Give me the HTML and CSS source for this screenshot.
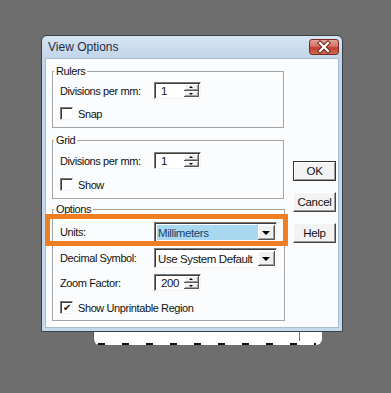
FILE: index.html
```html
<!DOCTYPE html>
<html lang="en">
<head>
  <meta charset="UTF-8" />
  <title>View Options</title>
  <link rel="stylesheet" href="styles.css">
</head>
<body>
  <div class="desk">
    <div class="window">
      <div class="titlebar">
        <span class="title">View Options</span>
        <span class="close">
          <svg width="28" height="14" viewBox="0 0 28 14">
            <path d="M10 3 L18 11 M18 3 L10 11" stroke="#6b2a20" stroke-width="4.2" stroke-linecap="square" fill="none"/>
            <path d="M10 3 L18 11 M18 3 L10 11" stroke="#fff" stroke-width="2.2" stroke-linecap="square" fill="none"/>
          </svg>
        </span>
      </div>
      <div class="frame">
        <div class="client">
          <div class="groups">
            <fieldset class="group">
              <legend>Rulers</legend>
              <div class="row">
                <span class="label">Divisions per mm:</span>
                <div class="spin"><span class="val">1</span><span class="arrows"><i class="up"></i><i class="down"></i></span></div>
              </div>
              <div class="check"><span class="box"></span>Snap</div>
            </fieldset>

            <fieldset class="group grid">
              <legend>Grid</legend>
              <div class="row">
                <span class="label">Divisions per mm:</span>
                <div class="spin"><span class="val">1</span><span class="arrows"><i class="up"></i><i class="down"></i></span></div>
              </div>
              <div class="check"><span class="box"></span>Show</div>
            </fieldset>

            <fieldset class="group options">
              <legend>Options</legend>
              <div class="row units">
                <span class="label">Units:</span>
                <div class="combo"><span class="val selected">Millimeters</span><span class="drop"><i></i></span></div>
                <span class="highlight"></span>
              </div>
              <div class="row">
                <span class="label">Decimal Symbol:</span>
                <div class="combo"><span class="val">Use System Default</span><span class="drop"><i></i></span></div>
              </div>
              <div class="row">
                <span class="label">Zoom Factor:</span>
                <div class="spin"><span class="val">200</span><span class="arrows"><i class="up"></i><i class="down"></i></span></div>
              </div>
              <div class="check"><span class="box checked">&#10004;</span>Show Unprintable Region</div>
            </fieldset>
          </div>

          <div class="buttons">
            <button class="default">OK</button>
            <button>Cancel</button>
            <button>Help</button>
          </div>
        </div>
      </div>
    </div>
    <div class="page-edge"><span class="tick"></span></div>
  </div>
</body>
</html>
```

FILE: styles.css
```css
body {
  margin: 0;
  height: 393px;
  overflow: hidden;
  background-color: #6e6e6e;
  font-family: "Liberation Sans", Arial, sans-serif;
  font-size: 11px;
  letter-spacing: -0.4px;
  color: #111;
}
.desk {
  padding: 35px 0 0 41px;
}
.window {
  width: 302px;
  height: 297px;
  box-sizing: border-box;
  border: 1px solid #39434e;
  border-radius: 6px 6px 0 0;
  background: linear-gradient(#d6e4f3, #c3d6ea 22px, #c6d9ec);
  display: flex;
  flex-direction: column;
}
.titlebar {
  height: 22px;
  display: flex;
  align-items: center;
  justify-content: space-between;
  padding: 0 3px 0 6px;
}
.title {
  font-size: 12px;
  letter-spacing: 0;
  color: #1c2c44;
}
.close {
  width: 28px;
  height: 14px;
  border: 1px solid #7a2a22;
  border-radius: 3px;
  background: linear-gradient(#e3a195, #d27363 45%, #c0402e 55%, #cf6a55);
  display: flex;
}
.frame {
  flex: 1;
  display: flex;
  padding: 0 3px 3px;
}
.client {
  flex: 1;
  display: flex;
  background: #fbfcfd;
  border: 1px solid #a9bdd2;
  padding: 6px 2px 0 6px;
}
.groups {
  width: 232px;
}
.group {
  margin: 0;
  border: 1px solid #a3a3a3;
  box-shadow: inset 1px 1px 0 #fff, 1px 1px 0 #fff;
  padding: 4px 7px 7px 7px;
}
.group legend {
  margin-left: -6px;
  padding: 0 2px;
  line-height: 13px;
}
.grid {
  margin-top: 6px;
  padding-top: 5px;
}
.options {
  margin-top: 4px;
  padding-top: 6px;
}
.row {
  display: flex;
  align-items: center;
}
.options .row + .row {
  margin-top: 6px;
}
.label {
  width: 94px;
}
.spin {
  width: 47px;
  height: 17px;
  box-sizing: border-box;
  border: 1px solid;
  border-color: #7c7c7c #f4f4f4 #f4f4f4 #7c7c7c;
  box-shadow: inset 1px 1px 0 #3c3c3c;
  background: #fff;
  display: flex;
  align-items: center;
  justify-content: space-between;
  padding: 1px 1px 1px 6px;
  font-size: 11.5px;
}
.arrows {
  width: 15px;
  align-self: stretch;
  display: flex;
  flex-direction: column;
}
.arrows i {
  flex: 1;
  position: relative;
  background: #f0f0f0;
  border-right: 1px solid #555;
  border-bottom: 1px solid #555;
  box-shadow: inset 1px 1px 0 #fff, inset -1px -1px 0 #a0a0a0;
}
.arrows i::after {
  content: "";
  position: absolute;
  left: 5px;
  top: 2px;
  border-left: 2px solid transparent;
  border-right: 2px solid transparent;
}
.arrows .up::after {
  border-bottom: 2px solid #000;
}
.arrows .down::after {
  border-top: 2px solid #000;
}
.combo {
  width: 123px;
  height: 20px;
  box-sizing: border-box;
  border: 1px solid;
  border-color: #7c7c7c #f4f4f4 #f4f4f4 #7c7c7c;
  box-shadow: inset 1px 1px 0 #3c3c3c;
  background: #fff;
  display: flex;
  padding: 2px 1px 1px 2px;
}
.combo .val {
  flex: 1;
  display: flex;
  align-items: center;
  padding-left: 1px;
  font-size: 11.5px;
}
.combo .selected {
  background: #a8d9f0;
  color: #1c3f6c;
}
.drop {
  width: 17px;
  box-sizing: border-box;
  background: #f0f0f0;
  border-right: 1px solid #555;
  border-bottom: 1px solid #555;
  box-shadow: inset 1px 1px 0 #fff, inset -1px -1px 0 #a0a0a0;
  display: flex;
  align-items: center;
  justify-content: center;
}
.drop i {
  border-left: 4px solid transparent;
  border-right: 4px solid transparent;
  border-top: 4px solid #000;
  margin-top: 1px;
}
.units {
  position: relative;
}
.highlight {
  position: absolute;
  left: -15px;
  top: -8px;
  width: 233px;
  height: 22px;
  border: 5px solid #ef7d22;
}
.check {
  display: flex;
  align-items: center;
  margin-top: 8px;
  height: 13px;
}
.grid .check {
  margin-top: 9px;
}
.options .check {
  margin-top: 10px;
}
.options {
  padding-bottom: 6px;
}
.box {
  width: 13px;
  height: 13px;
  box-sizing: border-box;
  border: 1px solid;
  border-color: #7c7c7c #f4f4f4 #f4f4f4 #7c7c7c;
  box-shadow: inset 1px 1px 0 #3c3c3c;
  background: #fff;
  margin-right: 5px;
  font-size: 10px;
  line-height: 11px;
  text-align: center;
  letter-spacing: 0;
}
.buttons {
  display: flex;
  flex-direction: column;
  gap: 11px;
  margin: 96px 0 0 9px;
}
.buttons button {
  width: 43px;
  height: 20px;
  padding: 0;
  font-family: inherit;
  font-size: 11.5px;
  letter-spacing: -0.3px;
  color: #111;
  background: #f3f3f3;
  border: 1px solid;
  border-color: #fff #444 #444 #fff;
  box-shadow: inset -1px -1px 0 #9a9a9a;
}
.buttons .default {
  border-color: #333;
  box-shadow: inset 1px 1px 0 #fff, inset -1px -1px 0 #9a9a9a;
}
.page-edge {
  position: relative;
  margin-left: 52px;
  width: 229px;
  height: 13px;
  box-sizing: border-box;
  background: #fff;
  border-left: 1px solid #555;
  border-radius: 0 0 6px 6px;
}
.page-edge::after {
  content: "";
  position: absolute;
  left: 4px;
  right: 6px;
  bottom: 0;
  height: 2px;
  background: repeating-linear-gradient(90deg, #111 0 7px, transparent 7px 24px);
}
.tick {
  position: absolute;
  left: 205px;
  top: 0;
  height: 9px;
  border-left: 1px solid #777;
}
```
